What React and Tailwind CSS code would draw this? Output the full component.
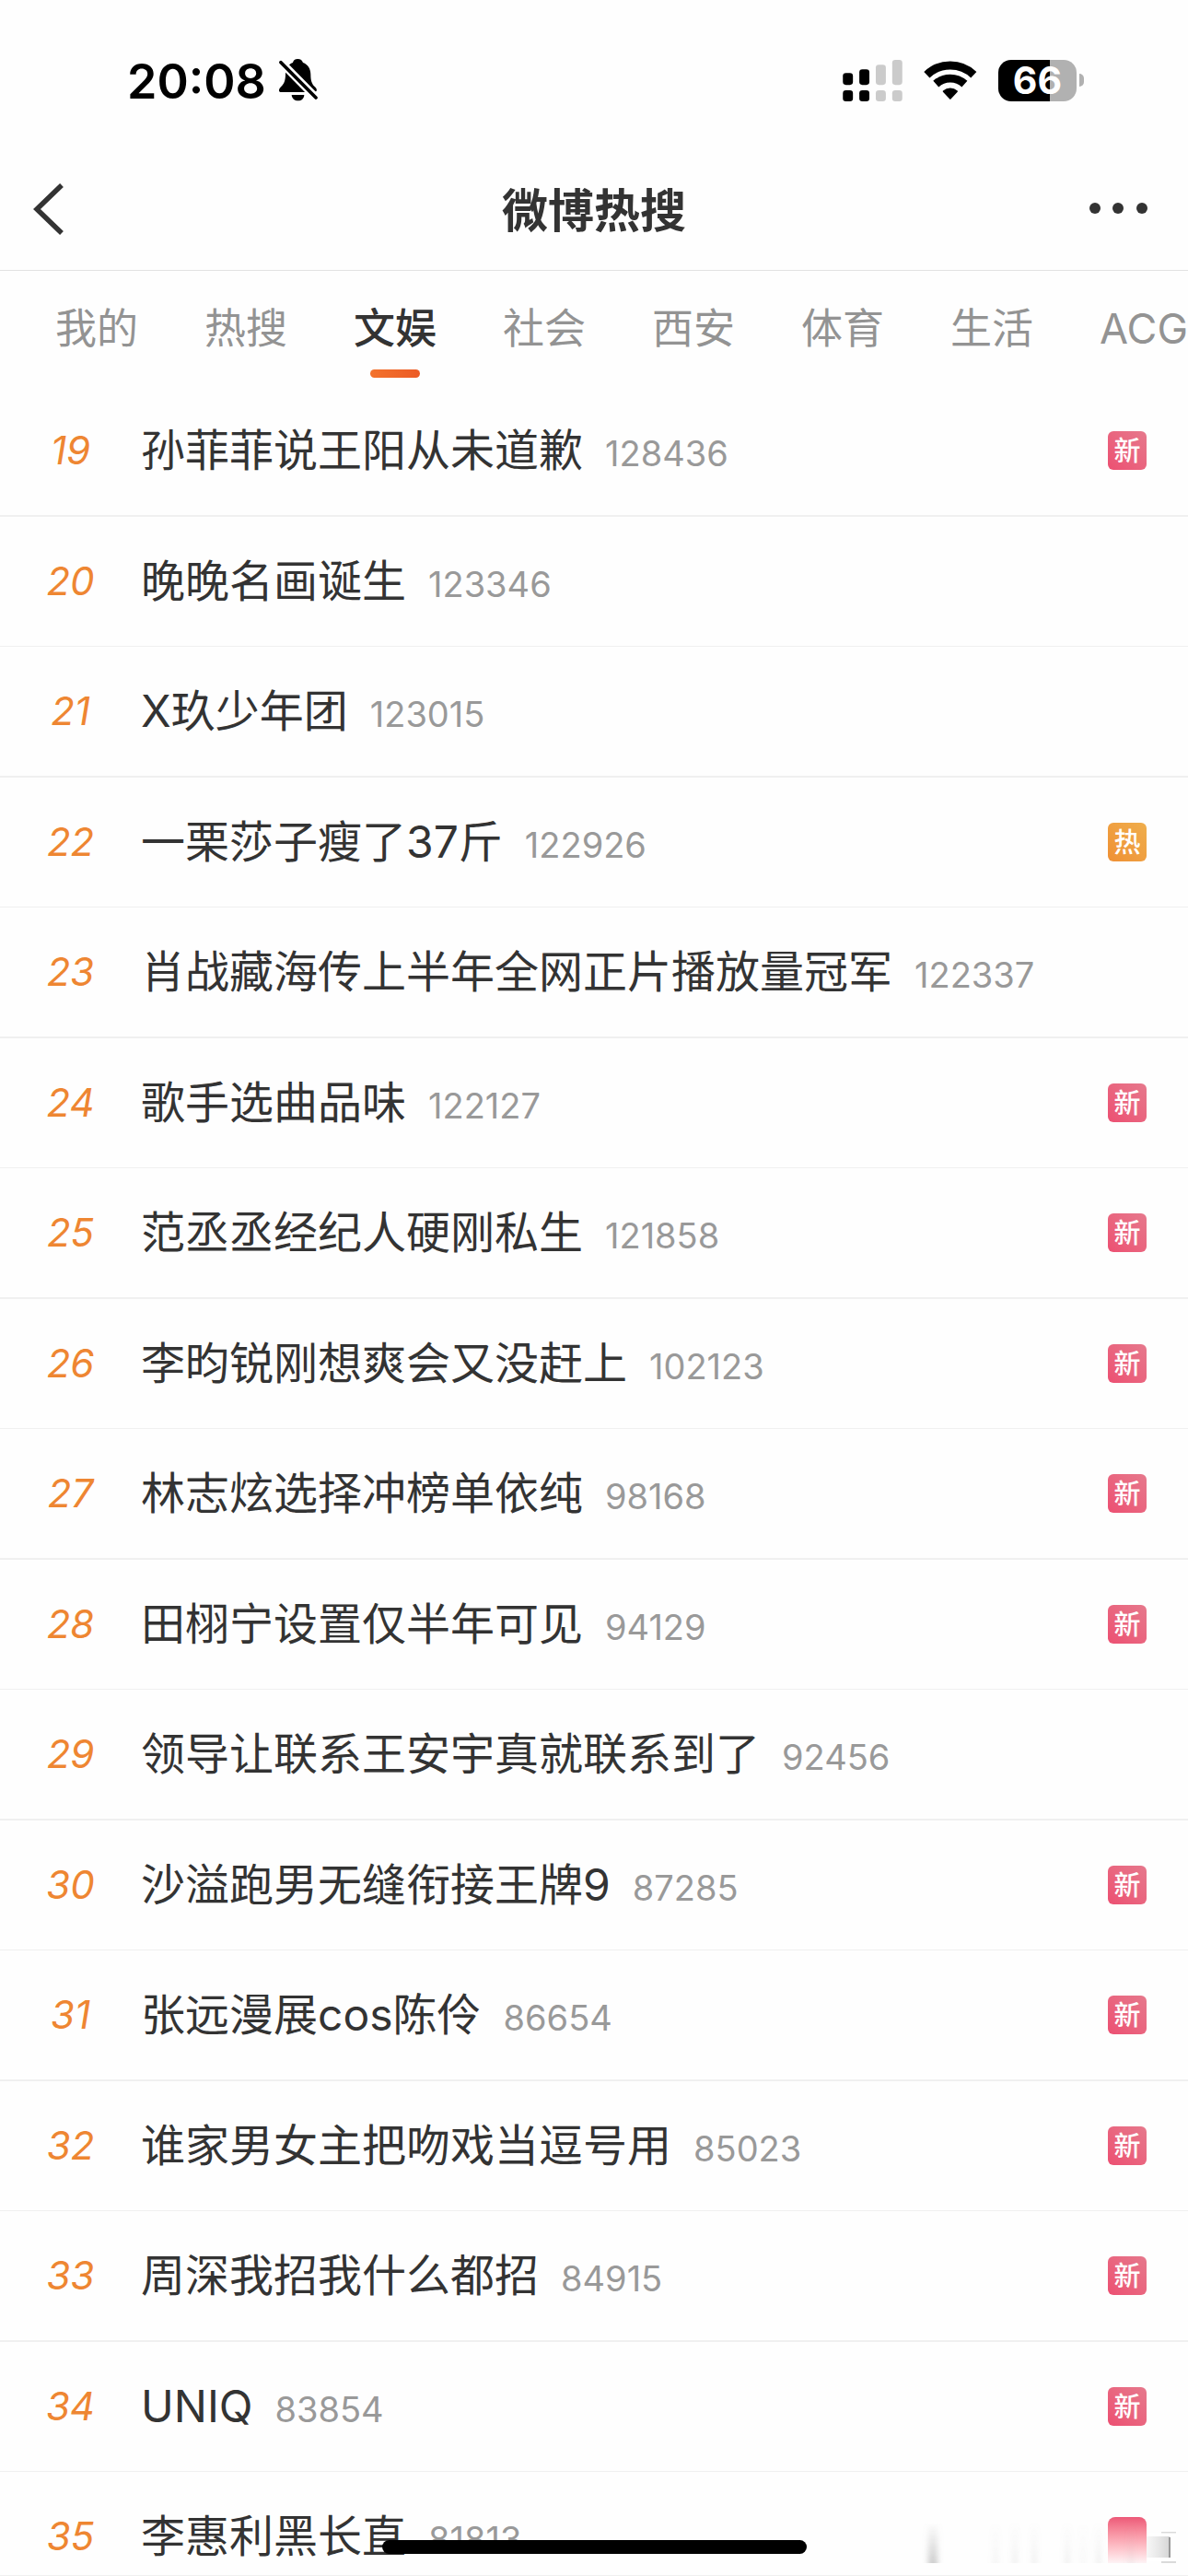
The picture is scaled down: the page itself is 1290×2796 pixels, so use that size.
import { useState } from "react";

const TABS = ["我的", "热搜", "文娱", "社会", "西安", "体育", "生活", "ACG"];

const TOPICS = [
  { rank: 19, title: "孙菲菲说王阳从未道歉", heat: 128436, tag: "新" },
  { rank: 20, title: "晚晚名画诞生", heat: 123346 },
  { rank: 21, title: "X玖少年团", heat: 123015 },
  { rank: 22, title: "一栗莎子瘦了37斤", heat: 122926, tag: "热" },
  { rank: 23, title: "肖战藏海传上半年全网正片播放量冠军", heat: 122337 },
  { rank: 24, title: "歌手选曲品味", heat: 122127, tag: "新" },
  { rank: 25, title: "范丞丞经纪人硬刚私生", heat: 121858, tag: "新" },
  { rank: 26, title: "李昀锐刚想爽会又没赶上", heat: 102123, tag: "新" },
  { rank: 27, title: "林志炫选择冲榜单依纯", heat: 98168, tag: "新" },
  { rank: 28, title: "田栩宁设置仅半年可见", heat: 94129, tag: "新" },
  { rank: 29, title: "领导让联系王安宇真就联系到了", heat: 92456 },
  { rank: 30, title: "沙溢跑男无缝衔接王牌9", heat: 87285, tag: "新" },
  { rank: 31, title: "张远漫展cos陈伶", heat: 86654, tag: "新" },
  { rank: 32, title: "谁家男女主把吻戏当逗号用", heat: 85023, tag: "新" },
  { rank: 33, title: "周深我招我什么都招", heat: 84915, tag: "新" },
  { rank: 34, title: "UNIQ", heat: 83854, tag: "新" },
  { rank: 35, title: "李惠利黑长直", heat: 81813, tag: "fade" },
];

function BellOff() {
  return (
    <svg width="42" height="46" viewBox="606 76 126 138" fill="none">
      <path
        d="M667 76c-9 0-15 5-16 12-16 6-24 20-24 38 0 22-6 32-15 41-9 10-8 17 3 17h104c11 0 13-8 4-17-10-10-14-19-14-41 0-18-9-32-25-38-2-7-8-12-17-12z"
        fill="#000"
      />
      <path d="M647 193h41c-1 12-9 19-20 19s-20-7-21-19z" fill="#000" />
      <path d="M606 80L736 212" stroke="#fff" strokeWidth="26" />
      <path d="M612 87L726 202" stroke="#000" strokeWidth="11" strokeLinecap="round" />
    </svg>
  );
}

function Signal() {
  return (
    <svg width="65" height="45" viewBox="108 71 195 136">
      <g fill="#000">
        <rect x="108" y="114" width="33" height="39" rx="10" />
        <rect x="162" y="102" width="33" height="51" rx="10" />
        <rect x="108" y="171" width="33" height="36" rx="10" />
        <rect x="162" y="171" width="33" height="36" rx="10" />
      </g>
      <g fill="#cbcbcb">
        <rect x="216" y="87" width="33" height="66" rx="10" />
        <rect x="270" y="71" width="33" height="82" rx="10" />
        <rect x="216" y="171" width="33" height="36" rx="10" />
        <rect x="270" y="171" width="33" height="36" rx="10" />
      </g>
    </svg>
  );
}

function Wifi() {
  return (
    <svg width="58" height="42" viewBox="371 75 173 127" fill="none" stroke="#000">
      <path d="M380 121a112 112 0 0 1 154 0" strokeWidth="27" />
      <path d="M410 151a70 70 0 0 1 94 0" strokeWidth="27" />
      <path d="M435 175c13-11 31-11 44 0l-22 24z" fill="#000" strokeWidth="5" strokeLinejoin="round" />
    </svg>
  );
}

function StatusBar() {
  return (
    <div className="flex h-[162px] shrink-0 items-center justify-between pt-3 pr-[113px] pl-[138px]">
      <div className="flex items-center gap-[14px]">
        <span className="pt-1 text-[52px] leading-none font-semibold text-black">20:08</span>
        <BellOff />
      </div>
      <div className="flex items-center">
        <Signal />
        <div className="ml-[23px]">
          <Wifi />
        </div>
        <div className="ml-[23px] flex h-[45px] w-[85px] items-center justify-center rounded-[14px] bg-[linear-gradient(to_right,#000_66%,#b1b1b1_66%)] text-[41px] leading-none font-bold text-white">
          66
        </div>
        <div className="ml-[3px] h-[14px] w-[5px] rounded-r-full bg-[#b1b1b1]" />
      </div>
    </div>
  );
}

function Header() {
  return (
    <header className="flex h-[132px] shrink-0 items-center justify-between border-b border-[#e2e2e2] px-9">
      <button aria-label="返回" className="w-20">
        <svg width="34" height="58" viewBox="0 0 34 58" fill="none" stroke="#333" strokeWidth="5.5">
          <path d="M31 2L4 28l27 26" />
        </svg>
      </button>
      <h1 className="pt-[2px] text-[50px] leading-none font-bold text-[#333]">微博热搜</h1>
      <button aria-label="更多" className="flex w-20 justify-end">
        <svg width="72" height="16" viewBox="0 0 72 16" fill="#333">
          <circle cx="7" cy="6" r="6" />
          <circle cx="32" cy="6" r="6" />
          <circle cx="58" cy="6" r="6" />
        </svg>
      </button>
    </header>
  );
}

function Tabs({ active, onChange }) {
  return (
    <nav className="flex h-[125px] shrink-0 gap-[72px] overflow-hidden pl-[60px]">
      {TABS.map((tab) => (
        <button
          key={tab}
          onClick={() => onChange(tab)}
          className={`flex shrink-0 flex-col items-center pt-[33px] text-[45px] leading-[60px] ${
            tab === active ? "font-medium text-[#333]" : "text-[#939393]"
          }`}
        >
          {tab}
          {tab === active && (
            <span className="mt-[14px] h-[9px] w-[54px] rounded-full bg-linear-to-r from-[#f3722c] to-[#ec5b26]" />
          )}
        </button>
      ))}
    </nav>
  );
}

function Tag({ type }) {
  if (type === "fade") {
    return <span className="mt-2 h-[50px] w-[42px] rounded-t-lg bg-linear-to-b from-[#ec5878] to-[#fdf3f5]" />;
  }
  return (
    <span
      className={`flex h-[42px] w-[42px] items-center justify-center rounded-md text-[29px] leading-none font-medium text-white ${
        type === "热"
          ? "bg-linear-to-tr from-[#ef9034] to-[#efae4c]"
          : "bg-linear-to-tr from-[#ec4f72] to-[#e6788c]"
      }`}
    >
      {type}
    </span>
  );
}

function TopicRow({ topic }) {
  return (
    <li className="border-[#f0f0f0] odd:h-[142px] odd:border-b-2 even:h-[141px] even:border-b">
      <a href="#" className="flex h-full items-center pr-[45px]">
        <span className="w-[153px] text-center">
          <span className="inline-block text-[42px] leading-none text-[#ee8632] italic">{topic.rank}</span>
        </span>
        <span className="flex flex-1 items-baseline gap-6">
          <span className="text-[48px] leading-[70px] text-[#333]">{topic.title}</span>
          <span className="text-[38px] text-[#999]">{topic.heat}</span>
        </span>
        {topic.tag && <Tag type={topic.tag} />}
      </a>
    </li>
  );
}

// faint vertical streaks left over in the bottom right corner
function Streaks() {
  return (
    <svg className="absolute right-0 bottom-3" width="297" height="50" viewBox="0 0 297 50">
      <defs>
        <linearGradient id="streak" x1="0" y1="0" x2="0" y2="1">
          <stop offset="0" stopColor="#999" stopOpacity="0" />
          <stop offset="1" stopColor="#999" stopOpacity="0.5" />
        </linearGradient>
        <linearGradient id="haze" x1="0" y1="0" x2="1" y2="0">
          <stop offset="0" stopColor="#ccc" stopOpacity="0.15" />
          <stop offset="1" stopColor="#bbb" stopOpacity="0.6" />
        </linearGradient>
        <filter id="soft" x="-5%" width="110%">
          <feGaussianBlur stdDeviation="3 0" />
        </filter>
      </defs>
      <g fill="url(#streak)" filter="url(#soft)">
        <rect x="15" y="4" width="10" height="44" />
        <rect x="86" y="4" width="4" height="44" opacity="0.3" />
        <rect x="107" y="4" width="4" height="44" opacity="0.4" />
        <rect x="128" y="4" width="4" height="44" opacity="0.4" />
        <rect x="164" y="4" width="4" height="44" opacity="0.4" />
        <rect x="181" y="4" width="4" height="44" opacity="0.2" />
        <rect x="198" y="4" width="4" height="44" opacity="0.4" />
        <rect x="233" y="4" width="4" height="44" opacity="0.3" />
      </g>
      <rect x="252" y="19" width="25" height="23" fill="url(#haze)" />
      <path d="M268 15h16M268 47h16" stroke="#ccc" strokeWidth="2" opacity="0.7" />
      <path d="M252 17h32M252 44h32" stroke="#fff" strokeWidth="3" />
      <path d="M277 20v22" stroke="#999" strokeWidth="2" />
    </svg>
  );
}

export default function App() {
  const [active, setActive] = useState("文娱");

  return (
    <div className="relative flex h-screen flex-col overflow-hidden bg-[#fefefe] font-['Inter','Noto_Sans_CJK_SC',sans-serif]">
      <StatusBar />
      <Header />
      <Tabs active={active} onChange={setActive} />
      <ul className="min-h-0 flex-1 overflow-hidden border-b border-[#f0f0f0]">
        {TOPICS.map((topic) => (
          <TopicRow key={topic.rank} topic={topic} />
        ))}
      </ul>
      <Streaks />
      <div className="absolute inset-x-0 bottom-6 mx-auto h-[15px] w-[461px] rounded-full bg-black" />
    </div>
  );
}
